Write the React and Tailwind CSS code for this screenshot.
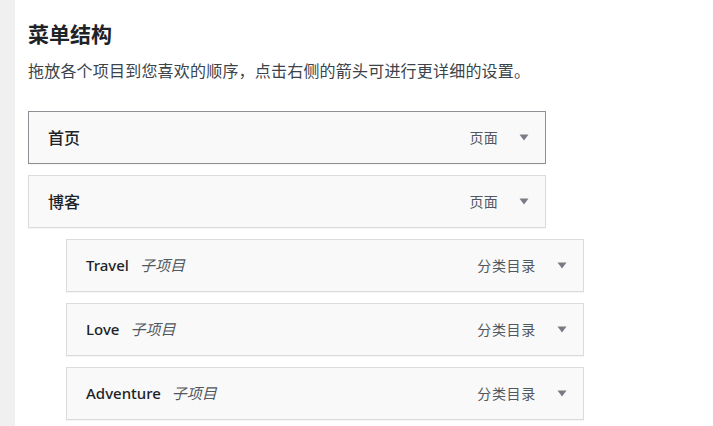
import React from 'react';

const items = [
  { title: '首页', type: '页面', depth: 0, active: true },
  { title: '博客', type: '页面', depth: 0 },
  { title: 'Travel', type: '分类目录', depth: 1, sub: true },
  { title: 'Love', type: '分类目录', depth: 1, sub: true },
  { title: 'Adventure', type: '分类目录', depth: 1, sub: true },
];

const Arrow = () => (
  <svg width="10" height="7" viewBox="0 0 10 7" className="ml-[21px] mr-[16px]">
    <path d="M0.5 0.5 H9.5 L5 6.5 Z" fill="#787c82" />
  </svg>
);

const MenuItem = ({ item }) => (
  <div
    className={`flex items-center h-[53px] w-[518px] border bg-[#f9f9f9] shadow-[0_1px_1px_rgba(0,0,0,0.04)] ${
      item.active ? 'border-[#8c8f94]' : 'border-[#dcdcde]'
    } ${item.depth === 1 ? 'ml-[38px]' : ''}`}
  >
    <div className="flex items-center flex-1 pl-[19px]">
      <span className={`text-[#1d2327] font-medium ${item.sub ? 'text-[15px]' : 'text-[16px]'}`}>
        {item.title}
      </span>
      {item.sub && (
        <span className="ml-[11px] italic text-[15px] text-[#50575e]">子项目</span>
      )}
    </div>
    <span className={`text-[14px] text-[#50575e] ${item.sub ? 'tracking-[0.7px]' : 'tracking-[0.3px]'}`}>
      {item.type}
    </span>
    <Arrow />
  </div>
);

export default function App() {
  return (
    <div
      className="flex w-[713px] h-[426px] overflow-hidden bg-white"
      style={{ fontFamily: '"Noto Sans", "Noto Sans CJK SC", sans-serif' }}
    >
      <div className="w-[15px] shrink-0 bg-[#f0f0f1]" />
      <div className="flex-1 pl-[13px] pt-[19px]">
        <h2 className="text-[21px] font-bold leading-[30px] text-[#1d2327]">菜单结构</h2>
        <p className="mt-[10px] text-[16px] leading-[24px] tracking-[0.2px] text-[#3c434a]">
          拖放各个项目到您喜欢的顺序，点击右侧的箭头可进行更详细的设置。
        </p>
        <div className="mt-[28px] flex flex-col gap-[11px]">
          {items.map((item) => (
            <MenuItem key={item.title} item={item} />
          ))}
        </div>
      </div>
    </div>
  );
}
